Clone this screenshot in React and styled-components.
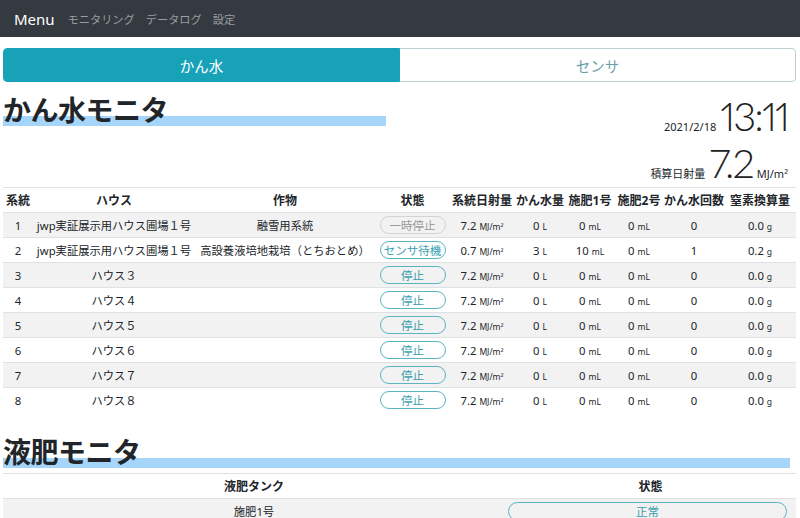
import React from "react";
import styled, { createGlobalStyle } from "styled-components";

const Global = createGlobalStyle`
  html, body { margin: 0; padding: 0; background: #fff; }
  body {
    font-family: "Noto Sans", "Noto Sans CJK JP", sans-serif;
    color: #212529;
    width: 800px;
    overflow: hidden;
  }
`;

const NavBar = styled.nav`
  height: 37px;
  background: #343a40;
  display: flex;
  align-items: center;
  padding: 0 14px;
  gap: 11px;
`;
const Brand = styled.span`
  color: #fff;
  font-size: 15px;
  margin-right: 2px;
`;
const NavLink = styled.span`
  color: #9a9da1;
  font-size: 11.2px;
`;

const Page = styled.main`
  padding: 0 4px 0 3px;
`;

const Tabs = styled.div`
  margin-top: 11px;
  display: flex;
  height: 34px;
  border-radius: 4px;
  overflow: hidden;
`;
const Tab = styled.div`
  flex: 1;
  display: flex;
  align-items: center;
  justify-content: center;
  font-size: 14.5px;
  box-sizing: border-box;
  background: ${(p) => (p.$active ? "#17a2b8" : "#fff")};
  color: ${(p) => (p.$active ? "#fff" : "#6a9ea6")};
  border: 1px solid ${(p) => (p.$active ? "#17a2b8" : "#b9cfd2")};
  border-left: ${(p) => (p.$active ? "1px solid #17a2b8" : "none")};
  border-radius: ${(p) => (p.$active ? "4px 0 0 4px" : "0 4px 4px 0")};
`;

const TopRow = styled.section`
  display: flex;
  justify-content: space-between;
  align-items: flex-start;
  padding-top: 10px;
`;
const Heading = styled.h2`
  margin: 0;
  font-family: "Noto Sans CJK JP", sans-serif;
  font-weight: 700;
  font-size: 28px;
  line-height: 34px;
  letter-spacing: -0.5px;
  width: ${(p) => p.$width || "auto"};
  margin-right: ${(p) => p.$mr || "0"};
  background: linear-gradient(transparent 70%, #a6d5fa 70%);
`;

const Clock = styled.div`
  display: flex;
  flex-direction: column;
  align-items: flex-end;
  padding-right: 8px;
`;
const ClockLine = styled.div`
  display: flex;
  align-items: baseline;
  gap: 4px;
  height: ${(p) => p.$h}px;
  line-height: ${(p) => p.$h}px;
`;
const Small = styled.span`
  font-size: 11px;
  font-family: "Noto Sans", "Noto Sans CJK JP", sans-serif;
`;
const Big = styled.span`
  font-family: Lato, "Open Sans", sans-serif;
  font-weight: 300;
  font-size: ${(p) => p.$size}px;
  letter-spacing: ${(p) => p.$ls}px;
  font-feature-settings: "pnum";
  font-variant-numeric: proportional-nums;
  color: #222;
`;

const Table = styled.table`
  width: 100%;
  border-collapse: collapse;
  table-layout: fixed;
  margin-top: ${(p) => p.$mt || "0"};
  font-family: "Noto Sans", "Noto Sans CJK JP", sans-serif;
`;
const Th = styled.th`
  height: 24px;
  padding: 0;
  font-size: 12px;
  font-weight: 700;
  text-align: center;
  border-top: 1px solid #dee2e6;
  border-bottom: 1px solid #dee2e6;
  white-space: nowrap;
`;
const Tr = styled.tr`
  background: ${(p) => (p.$striped ? "#f2f2f2" : "#fff")};
`;
const Td = styled.td`
  height: 24px;
  padding: 0 ${(p) => p.$pr || "2px"} 0 ${(p) => p.$pl || "2px"};
  font-size: 11.3px;
  text-align: center;
  border-top: 1px solid #dee2e6;
  white-space: nowrap;
`;
const Unit = styled.span`
  font-size: 8.5px;
  margin-left: 3px;
`;
const Badge = styled.span`
  display: inline-flex;
  align-items: center;
  justify-content: center;
  box-sizing: border-box;
  width: 66px;
  height: 18px;
  border-radius: 10px;
  font-size: 11.5px;
  font-family: "Noto Sans CJK JP", sans-serif;
  border: 1px solid ${(p) => (p.$muted ? "#d3d3d3" : "#5cb3c1")};
  color: ${(p) => (p.$muted ? "#9b9b9b" : "#3a9fb0")};
  vertical-align: middle;
`;
const WideBadge = styled(Badge)`
  width: 100%;
  height: 19px;
  border-radius: 11px;
`;

const Section2 = styled.section`
  margin-top: 22px;
`;

const rows = [
  { no: 1, house: "jwp実証展示用ハウス圃場１号", crop: "融雪用系統", st: "一時停止", muted: true, sun: "7.2", w: 0, f1: 0, f2: 0, n: 0, g: "0.0" },
  { no: 2, house: "jwp実証展示用ハウス圃場１号", crop: "高設養液培地栽培（とちおとめ）", st: "センサ待機", sun: "0.7", w: 3, f1: 10, f2: 0, n: 1, g: "0.2" },
  ...[3, 4, 5, 6, 7, 8].map((i) => ({ no: i, house: `ハウス${String.fromCharCode(0xff10 + i)}`, crop: "", st: "停止", sun: "7.2", w: 0, f1: 0, f2: 0, n: 0, g: "0.0" })),
];

const cols = [30, 162, 180, 75, 64, 52, 48, 50, 60, 72];

export default function App() {
  return (
    <>
      <Global />
      <NavBar>
        <Brand>Menu</Brand>
        <NavLink>モニタリング</NavLink>
        <NavLink>データログ</NavLink>
        <NavLink>設定</NavLink>
      </NavBar>
      <Page>
        <Tabs>
          <Tab $active>かん水</Tab>
          <Tab>センサ</Tab>
        </Tabs>
        <TopRow>
          <Heading $width="383px">かん水モニタ</Heading>
          <Clock>
            <ClockLine $h={49}>
              <Small>2021/2/18</Small>
              <Big $size={40} $ls={-2}>13:11</Big>
            </ClockLine>
            <ClockLine $h={45}>
              <Small>積算日射量</Small>
              <Big $size={40} $ls={-2}>7.2</Big>
              <Small>MJ/m²</Small>
            </ClockLine>
          </Clock>
        </TopRow>
        <Table $mt="1px">
          <colgroup>
            {cols.map((w, i) => (
              <col key={i} style={{ width: w }} />
            ))}
          </colgroup>
          <thead>
            <tr>
              <Th>系統</Th>
              <Th>ハウス</Th>
              <Th>作物</Th>
              <Th>状態</Th>
              <Th>系統日射量</Th>
              <Th>かん水量</Th>
              <Th>施肥1号</Th>
              <Th>施肥2号</Th>
              <Th>かん水回数</Th>
              <Th>窒素換算量</Th>
            </tr>
          </thead>
          <tbody>
            {rows.map((r, i) => (
              <Tr key={r.no} $striped={i % 2 === 0}>
                <Td>{r.no}</Td>
                <Td>{r.house}</Td>
                <Td>{r.crop}</Td>
                <Td>
                  <Badge $muted={r.muted}>{r.st}</Badge>
                </Td>
                <Td>
                  {r.sun}
                  <Unit>MJ/m²</Unit>
                </Td>
                <Td>
                  {r.w}
                  <Unit>L</Unit>
                </Td>
                <Td>
                  {r.f1}
                  <Unit>mL</Unit>
                </Td>
                <Td>
                  {r.f2}
                  <Unit>mL</Unit>
                </Td>
                <Td>{r.n}</Td>
                <Td>
                  {r.g}
                  <Unit>g</Unit>
                </Td>
              </Tr>
            ))}
          </tbody>
        </Table>
        <Section2>
          <Heading $mr="6px">液肥モニタ</Heading>
          <Table $mt="5px">
            <colgroup>
              <col style={{ width: 502 }} />
              <col style={{ width: 291 }} />
            </colgroup>
            <thead>
              <tr>
                <Th>液肥タンク</Th>
                <Th>状態</Th>
              </tr>
            </thead>
            <tbody>
              <Tr $striped>
                <Td>施肥1号</Td>
                <Td $pl="3px" $pr="9px">
                  <WideBadge>正常</WideBadge>
                </Td>
              </Tr>
            </tbody>
          </Table>
        </Section2>
      </Page>
    </>
  );
}
